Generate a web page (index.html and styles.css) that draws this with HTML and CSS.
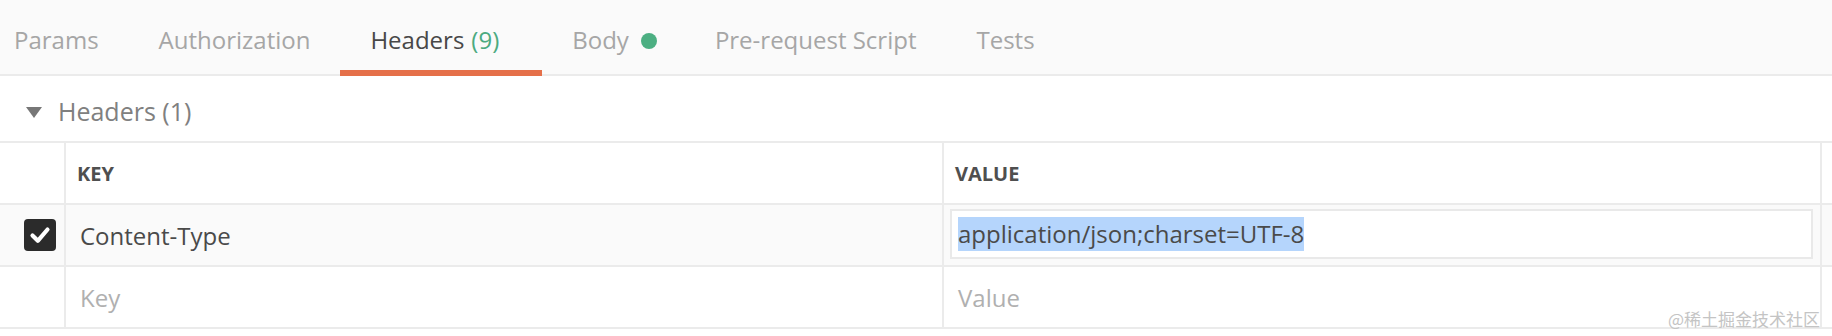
FILE: index.html
```html
<!DOCTYPE html>
<html lang="en">
<head>
  <meta charset="UTF-8" />
  <title>Request | Headers</title>
  <link rel="stylesheet" href="styles.css">
</head>
<body>

  <div class="request-tabs">
    <div class="tab first">Params</div>
    <div class="tab">Authorization</div>
    <div class="tab active"><span>Headers</span><span class="count">(9)</span></div>
    <div class="tab body-tab"><span>Body</span><span class="dot"></span></div>
    <div class="tab">Pre-request Script</div>
    <div class="tab">Tests</div>
  </div>

  <div class="section-title">
    <span class="caret"></span>
    <span>Headers (1)</span>
  </div>

  <div class="kv-table">
    <div class="kv-row head">
      <div class="cell check"></div>
      <div class="cell">KEY</div>
      <div class="cell">VALUE</div>
      <div class="cell"></div>
    </div>
    <div class="kv-row filled">
      <div class="cell check">
        <span class="checkbox">
          <svg width="32" height="32" viewBox="0 0 32 32">
            <path d="M8.5 16.5 L13.8 21.8 L23.5 10.5" fill="none" stroke="#fff" stroke-width="4.2" stroke-linecap="round" stroke-linejoin="round"/>
          </svg>
        </span>
      </div>
      <div class="cell">Content-Type</div>
      <div class="cell">
        <div class="value-box"><span class="selected">application/json;charset=UTF-8</span></div>
      </div>
      <div class="cell"></div>
    </div>
    <div class="kv-row">
      <div class="cell check"></div>
      <div class="cell placeholder">Key</div>
      <div class="cell placeholder">Value</div>
      <div class="cell"></div>
    </div>
  </div>

  <div class="watermark">@稀土掘金技术社区</div>

</body>
</html>
```

FILE: styles.css
```css
* {
  box-sizing: border-box;
  margin: 0;
  padding: 0;
}

body {
  background: #fff;
  color: #505050;
  font-family: 'Open Sans', sans-serif;
  width: 1832px;
  height: 336px;
  overflow: hidden;
  position: relative;
}

.request-tabs {
  display: flex;
  height: 76px;
  background: #fafafa;
  border-bottom: 2px solid #ebebeb;
}

.tab {
  display: flex;
  align-items: center;
  padding: 8px 30px 0;
  font-size: 24px;
  color: #a6a6a6;
  border-bottom: 6px solid transparent;
  margin-bottom: -2px;
  white-space: nowrap;
}

.tab.first {
  padding-left: 14px;
}

.tab.active {
  color: #484848;
  border-bottom-color: #e5704a;
  padding-right: 43px;
}

.tab.body-tab {
  padding-right: 28px;
}

.tab .count {
  color: #4caa80;
  margin-left: 7px;
}

.dot {
  display: inline-block;
  width: 16px;
  height: 16px;
  border-radius: 50%;
  background: #4caf82;
  margin-left: 12px;
  margin-top: 3px;
}

.section-title {
  display: flex;
  align-items: center;
  height: 65px;
  padding: 5px 0 0 26px;
  font-size: 25px;
  color: #808080;
}

.caret {
  width: 0;
  height: 0;
  border-left: 8px solid transparent;
  border-right: 8px solid transparent;
  border-top: 11px solid #777;
  margin-right: 16px;
  margin-top: 2px;
}

.kv-table {
  border-top: 2px solid #ebebeb;
}

.kv-row {
  display: grid;
  grid-template-columns: 64px 878px 878px 1fr;
  height: 62px;
  border-bottom: 2px solid #ebebeb;
  font-size: 24px;
}

.kv-row.filled {
  background: #fafafa;
}

.cell {
  display: flex;
  align-items: center;
  padding-left: 14px;
  border-left: 2px solid #ebebeb;
  color: #4a4a4a;
}

.cell.check {
  border-left: none;
  padding-left: 0;
  justify-content: flex-end;
  padding-right: 8px;
}

.kv-row.head .cell {
  font-size: 20px;
  font-weight: 700;
  color: #4f4f4f;
  padding-left: 11px;
}

.placeholder {
  color: #b0b0b0;
}

.checkbox {
  display: flex;
  width: 32px;
  height: 32px;
  border-radius: 4px;
  background: #2b2b2b;
}

.kv-row.filled .cell:nth-child(3) {
  padding: 4px 7px 6px 6px;
  align-items: stretch;
}

.value-box {
  flex: 1;
  display: flex;
  align-items: center;
  padding-left: 6px;
  background: #fff;
  border: 2px solid #e9e9e9;
}

.selected {
  background: #b5d5fc;
  color: #4a4a4a;
  line-height: 34px;
}

.watermark {
  position: absolute;
  right: 12px;
  top: 306px;
  font-family: 'Noto Sans CJK SC', sans-serif;
  font-size: 17px;
  color: #c4c4c4;
}
```
